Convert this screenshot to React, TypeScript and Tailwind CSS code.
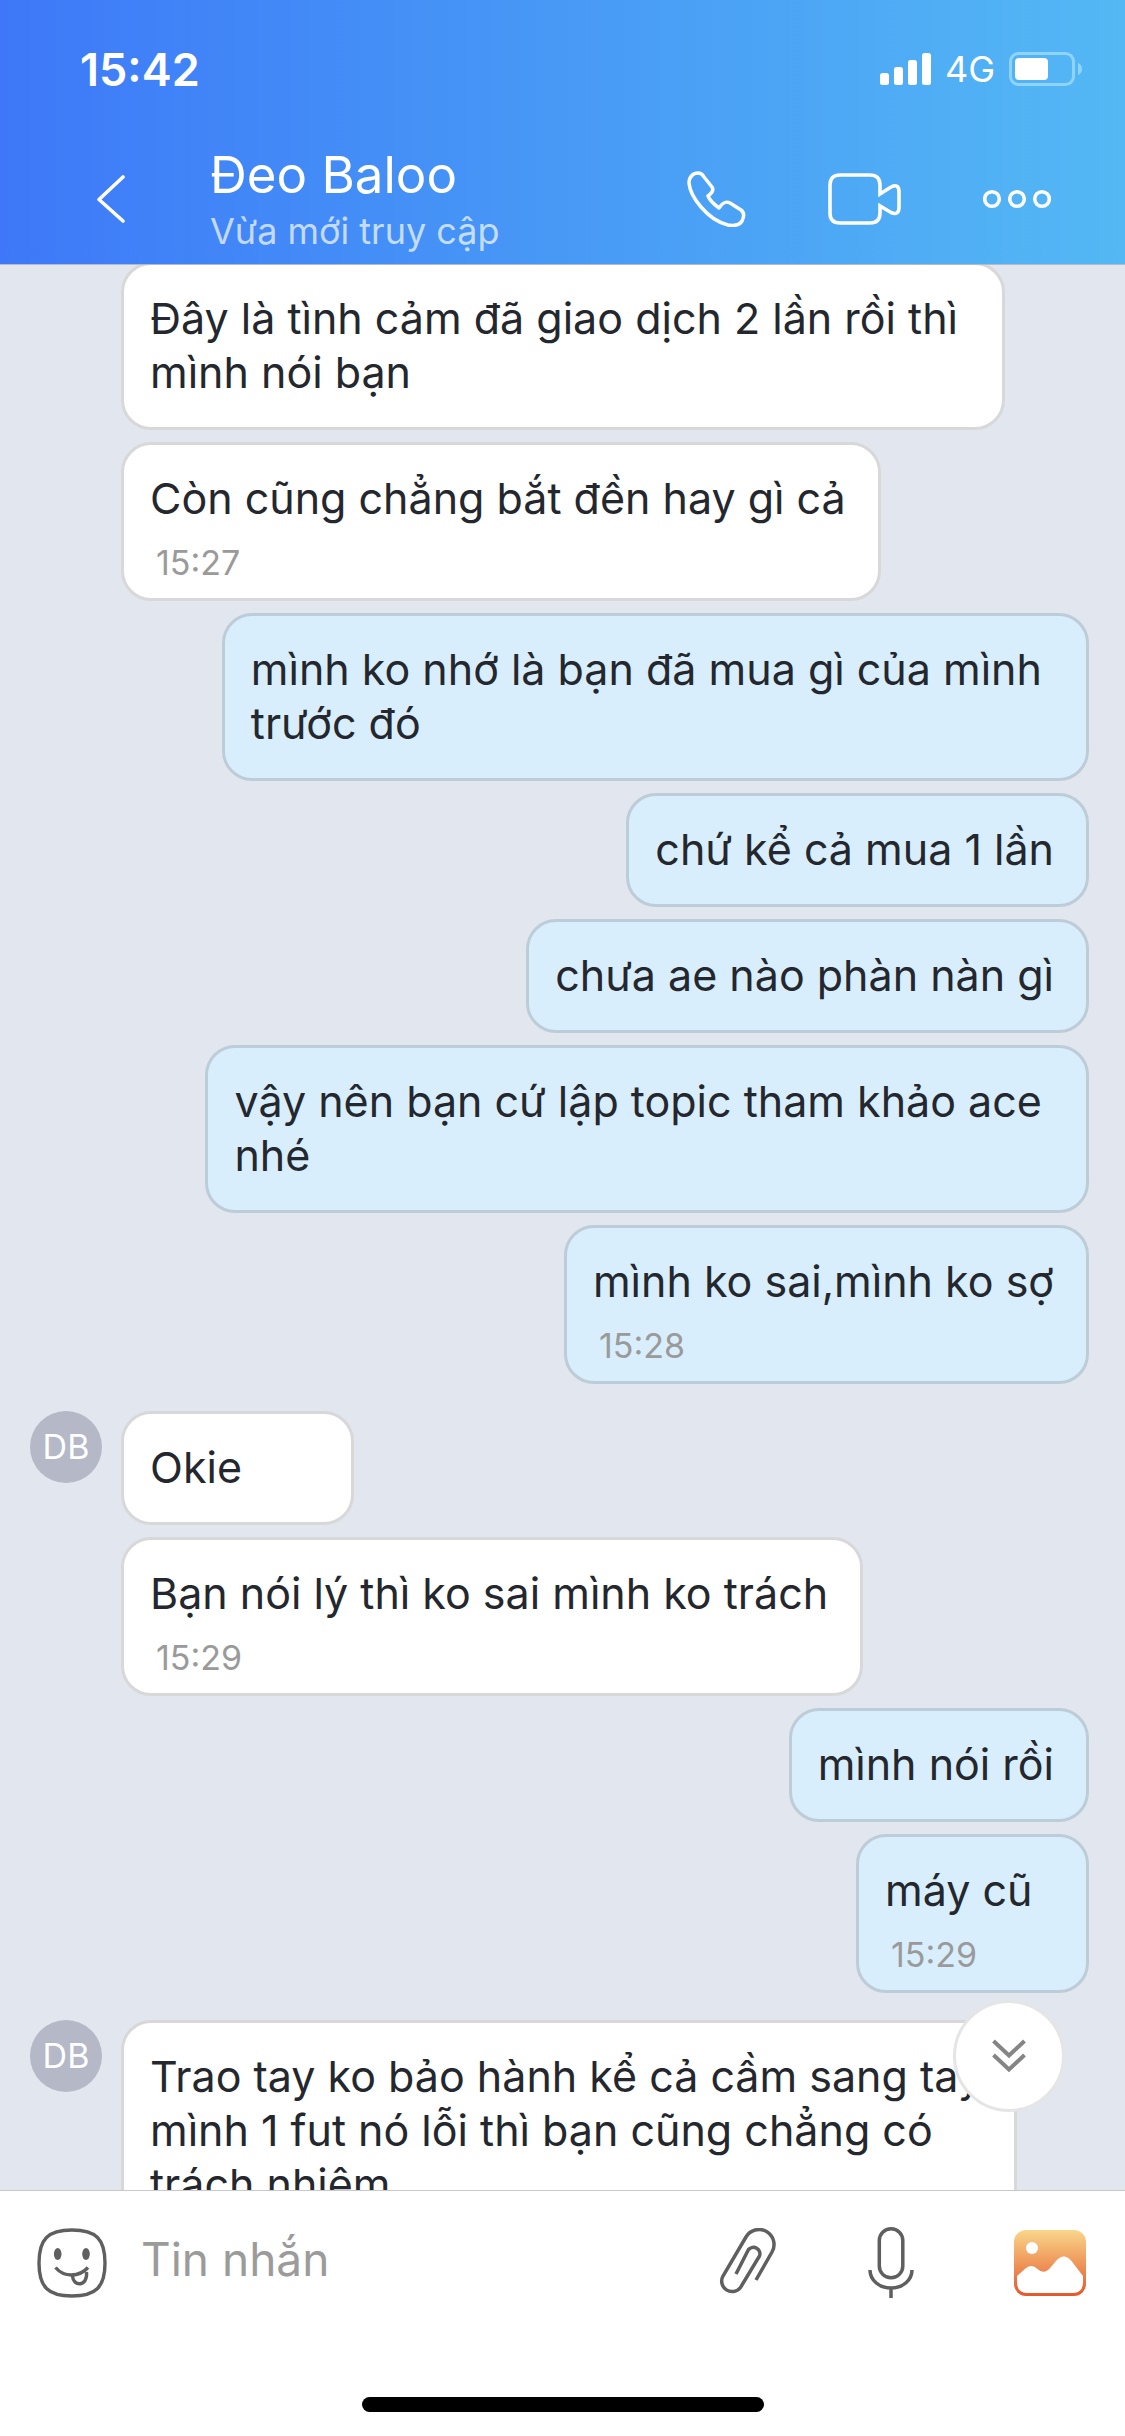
import React from 'react';
import clsx from 'clsx';

interface Message {
  text: string;
  mine?: boolean;
  time?: string;
  avatar?: boolean;
}

const messages: Message[] = [
  { text: 'Đây là tình cảm đã giao dịch 2 lần rồi thì\u00a0\nmình nói bạn' },
  { text: 'Còn cũng chẳng bắt đền hay gì cả', time: '15:27' },
  { text: 'mình ko nhớ là bạn đã mua gì của mình\u00a0\ntrước đó', mine: true },
  { text: 'chứ kể cả mua 1 lần', mine: true },
  { text: 'chưa ae nào phàn nàn gì', mine: true },
  { text: 'vậy nên bạn cứ lập topic tham khảo ace\u00a0\nnhé', mine: true },
  { text: 'mình ko sai,mình ko sợ', mine: true, time: '15:28' },
  { text: 'Okie', avatar: true },
  { text: 'Bạn nói lý thì ko sai mình ko trách', time: '15:29' },
  { text: 'mình nói rồi', mine: true },
  { text: 'máy cũ', mine: true, time: '15:29' },
  {
    text: 'Trao tay ko bảo hành kể cả cầm sang tay\nmình 1 fut nó lỗi thì bạn cũng chẳng có\ntrách nhiệm',
    avatar: true,
  },
];

const StatusBar = () => (
  <div className="flex h-[138px] items-center justify-between pl-20 pr-[42px] text-white">
    <span className="text-[45px] leading-none font-semibold">15:42</span>
    <div className="flex items-center gap-[14px]">
      <svg width="51" height="33" viewBox="0 0 51 33" fill="currentColor">
        <rect x="0" y="20" width="9" height="12" rx="2.5" />
        <rect x="14" y="14" width="9" height="18" rx="2.5" />
        <rect x="28" y="7" width="9" height="25" rx="2.5" />
        <rect x="42" y="0" width="9" height="32" rx="2.5" />
      </svg>
      <span className="text-4xl leading-none">4G</span>
      <svg width="74" height="34" viewBox="0 0 74 34" fill="none">
        <rect x="1.5" y="1.5" width="63" height="31" rx="8" stroke="#8fd3f9" strokeWidth="3" />
        <rect x="6" y="6" width="33" height="22" rx="4" fill="#fff" />
        <path d="M69 11C72 12 73 14.500 73 17S72 22 69 23Z" fill="#8fd3f9" />
      </svg>
    </div>
  </div>
);

const Header = () => (
  <header className="shrink-0 border-b border-[#b5bac6] bg-linear-to-r from-[#3e78f8] via-[#4899f6] to-[#54b8f4]">
    <StatusBar />
    <div className="flex h-[126px] items-center pl-[97px] pr-[74px] pb-1 text-white">
      <button type="button" aria-label="Back" className="mr-[85px] shrink-0">
        <svg width="28" height="48" viewBox="0 0 28 48" fill="none" stroke="currentColor" strokeWidth="3.600" strokeLinecap="round" strokeLinejoin="round">
          <path d="M26 2L2 24.500L26 46" />
        </svg>
      </button>
      <div className="min-w-0 flex-1">
        <h1 className="text-[51px] leading-[64px]">Đeo Baloo</h1>
        <p className="text-4xl leading-[48px] text-white/70">Vừa mới truy cập</p>
      </div>
      <div className="flex shrink-0 items-center gap-[82px]">
        <button type="button" aria-label="Call">
          <svg width="59" height="56" viewBox="0 0 59 56" fill="none" stroke="currentColor" strokeWidth="3.500" strokeLinejoin="round">
            <path d="M2 12C2 6 6 2 11 2C14 2 16 4 17 6L25 16C27 19 25 22 21 25C23 30 28 34 32 37C36 31 39 30 43 32L54 39C58 42 57 46 55 50C52 55 47 55 41 54C20 49 3 25 2 12Z" />
          </svg>
        </button>
        <button type="button" aria-label="Video call">
          <svg width="73" height="52" viewBox="0 0 73 52" fill="none" stroke="currentColor" strokeWidth="3.600">
            <path d="M52 21V12Q52 2 42 2H12Q2 2 2 12V40Q2 50 12 50H42Q52 50 52 40V33L63 39.500Q71 43 71 34V19Q71 10 63 14Z" />
          </svg>
        </button>
        <button type="button" aria-label="More">
          <svg width="68" height="20" viewBox="0 0 68 20" fill="none" stroke="currentColor" strokeWidth="3.600">
            <circle cx="9" cy="10" r="7.300" />
            <circle cx="34" cy="10" r="7.300" />
            <circle cx="59" cy="10" r="7.300" />
          </svg>
        </button>
      </div>
    </div>
  </header>
);

const Bubble: React.FC<{ message: Message }> = ({ message }) => (
  <div
    className={clsx(
      'min-w-[233px] rounded-[30px] border-[3px] pt-[26px] pl-[26px] pr-8',
      message.mine ? 'border-[#bccdd8] bg-[#d9eefd]' : 'border-[#d8d8d8] bg-white',
      message.time ? 'pb-[15px]' : 'pb-7',
    )}
  >
    <p className="text-[43px] leading-[54px] whitespace-pre-line text-[#24282e]">{message.text}</p>
    {message.time && (
      <time className="mt-[18px] ml-1.5 block text-[34px] leading-10 text-[#9a9a9a]">{message.time}</time>
    )}
  </div>
);

const MessageRow: React.FC<{ message: Message }> = ({ message }) => (
  <li
    className={clsx(
      'flex items-start',
      message.mine ? 'justify-end' : 'gap-[19px]',
      message.avatar && 'mt-[15px]',
    )}
  >
    {!message.mine && (
      <div className="w-[72px] shrink-0">
        {message.avatar && (
          <div className="flex size-[72px] items-center justify-center rounded-full bg-[#b4b8c7] text-[34px] leading-none text-white">
            DB
          </div>
        )}
      </div>
    )}
    <Bubble message={message} />
  </li>
);

const Composer = () => (
  <footer className="flex h-[246px] shrink-0 flex-col items-center justify-between border-t border-[#c9c9cb] bg-white pb-6">
    <div className="flex w-full items-center pt-9 pl-[37px] pr-[39px] text-[#5f5f5f]">
      <button type="button" aria-label="Stickers" className="mr-[34px] shrink-0">
        <svg width="70" height="70" viewBox="0 0 70 70" fill="none" stroke="currentColor" strokeWidth="3.400">
          <path d="M35 2C59 2 68 11 68 35S59 68 35 68S2 59 2 35S11 2 35 2Z" />
          <ellipse cx="20.700" cy="26" rx="3.800" ry="6" fill="currentColor" stroke="none" />
          <ellipse cx="49" cy="26" rx="3.800" ry="6" fill="currentColor" stroke="none" />
          <path d="M18.500 39.500C27 49.500 42 49.500 51 39.500" />
          <path d="M35.500 48C36 59 51 59 49.500 44" />
        </svg>
      </button>
      <input
        type="text"
        aria-label="Tin nhắn"
        placeholder="Tin nhắn"
        className="h-[70px] min-w-0 flex-1 bg-transparent pb-2 text-[46px] text-[#24282e] outline-none placeholder:text-[#9b9b9b]"
      />
      <div className="flex shrink-0 items-center">
        <button type="button" aria-label="Attach file" className="mr-[92px]">
          <svg width="57" height="70" viewBox="0 0 57 70" fill="none" stroke="currentColor" strokeWidth="3.500">
            <path d="M37 52L53 24A15 15 0 0 0 27 9L4 48A10.500 10.500 0 0 0 21.500 59.500L40.500 28A6.500 6.500 0 0 0 29.500 21.500L17 46" />
          </svg>
        </button>
        <button type="button" aria-label="Record voice" className="mr-[100px]">
          <svg width="46" height="71" viewBox="0 0 46 71" fill="none" stroke="currentColor" strokeWidth="3.500">
            <rect x="11.300" y="1.800" width="23.500" height="49" rx="11.700" />
            <path d="M2 43C2 53 11 61 23 61S44 53 44 43M23 61V71" />
          </svg>
        </button>
        <button type="button" aria-label="Send photo">
          <svg width="72" height="66" viewBox="0 0 72 66" fill="#fff">
            <defs>
              <linearGradient id="photo" x1="0" y1="0" x2="0" y2="1">
                <stop offset="0" stopColor="#f9d78a" />
                <stop offset="1" stopColor="#e5572c" />
              </linearGradient>
            </defs>
            <rect width="72" height="66" rx="12" fill="url(#photo)" />
            <circle cx="18" cy="18" r="6" />
            <path d="M3 46L12 38Q18 33.500 23.500 39Q30 45 36 38L42 31Q50 22 57.500 31L69 46V52Q69 63 59 63H13Q3 63 3 52Z" />
          </svg>
        </button>
      </div>
    </div>
    <div className="h-[15px] w-[402px] rounded-full bg-black" />
  </footer>
);

export default function App() {
  return (
    <div className="flex h-screen flex-col overflow-hidden bg-[#e2e6ef] font-[Inter,'Noto_Sans',sans-serif]">
      <Header />
      <main className="relative min-h-0 flex-1 overflow-hidden">
        <ul className="-mt-[3px] flex flex-col gap-3 pr-9 pl-[30px]">
          {messages.map((message, idx) => (
            <MessageRow key={idx} message={message} />
          ))}
        </ul>
        <button
          type="button"
          aria-label="Scroll to latest"
          className="absolute right-[60px] bottom-[78px] flex size-28 items-center justify-center rounded-full border-[3px] border-[#e5e5e5] bg-white"
        >
          <svg width="34" height="34" viewBox="0 0 34 34" fill="none" stroke="#858585" strokeWidth="4">
            <path d="M1.500 2L17 16.500L32.500 2M1.500 16L17 30.500L32.500 16" />
          </svg>
        </button>
      </main>
      <Composer />
    </div>
  );
}
